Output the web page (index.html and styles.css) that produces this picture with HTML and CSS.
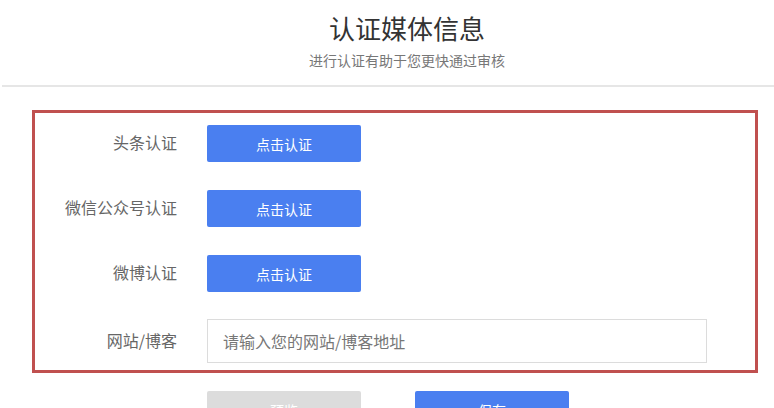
FILE: index.html
```html
<!DOCTYPE html>
<html lang="zh-CN">
<head>
<meta charset="utf-8">
<title>认证媒体信息</title>
<link rel="stylesheet" href="styles.css">
</head>
<body>
<header class="head">
  <h1 class="title">认证媒体信息</h1>
  <p class="subtitle">进行认证有助于您更快通过审核</p>
</header>
<section class="box">
  <div class="row">
    <div class="label">头条认证</div>
    <button class="btn">点击认证</button>
  </div>
  <div class="row">
    <div class="label">微信公众号认证</div>
    <button class="btn">点击认证</button>
  </div>
  <div class="row">
    <div class="label">微博认证</div>
    <button class="btn">点击认证</button>
  </div>
  <div class="row row-input">
    <div class="label">网站/博客</div>
    <input class="field" type="text" placeholder="请输入您的网站/博客地址">
  </div>
</section>
<div class="actions">
  <button class="btn btn-grey">预览</button>
  <button class="btn">保存</button>
</div>
</body>
</html>
```

FILE: styles.css
```css
* { box-sizing: border-box; }
html, body { margin: 0; padding: 0; background: #fff; }
body {
  font-family: "Noto Sans CJK SC", "Noto Sans", sans-serif;
  color: #333;
  width: 774px;
  height: 408px;
  overflow: hidden;
}
.head {
  margin-left: 2px;
  padding-top: 12px;
  padding-bottom: 15px;
  padding-left: 38px;
  border-bottom: 2px solid #e6e6e6;
  text-align: center;
}
.title {
  margin: 0;
  font-size: 26px;
  line-height: 32px;
  font-weight: 400;
  color: #333;
}
.subtitle {
  margin: 6px 0 0;
  font-size: 14px;
  line-height: 20px;
  color: #777;
}
.box {
  margin: 23px 0 0 32px;
  width: 726px;
  height: 263px;
  border: 3px solid #c0504f;
  padding-top: 12px;
  display: flex;
  flex-direction: column;
  gap: 28px;
}
.row {
  display: flex;
  align-items: center;
  gap: 30px;
  height: 37px;
}
.row-input { height: 44px; margin-top: -1px; }
.label {
  width: 142px;
  text-align: right;
  font-size: 16px;
  line-height: 20px;
  color: #666;
  margin-top: -3px;
}
.btn {
  width: 154px;
  height: 37px;
  border: 0;
  border-radius: 2px;
  background: #4a7ff0;
  color: #fff;
  font-family: "Noto Sans CJK SC", "Noto Sans", sans-serif;
  font-size: 14px;
  padding: 0;
}
.field {
  width: 500px;
  height: 44px;
  border: 1px solid #dcdcdc;
  padding: 0 15px;
  font-family: "Noto Sans CJK SC", "Noto Sans", sans-serif;
  font-size: 16px;
  color: #333;
  outline: none;
}
.field::placeholder { color: #777; }
.actions {
  margin: 18px 0 0 207px;
  display: flex;
  gap: 54px;
}
.btn-grey { background: #dcdcdc; color: #fff; }
```
